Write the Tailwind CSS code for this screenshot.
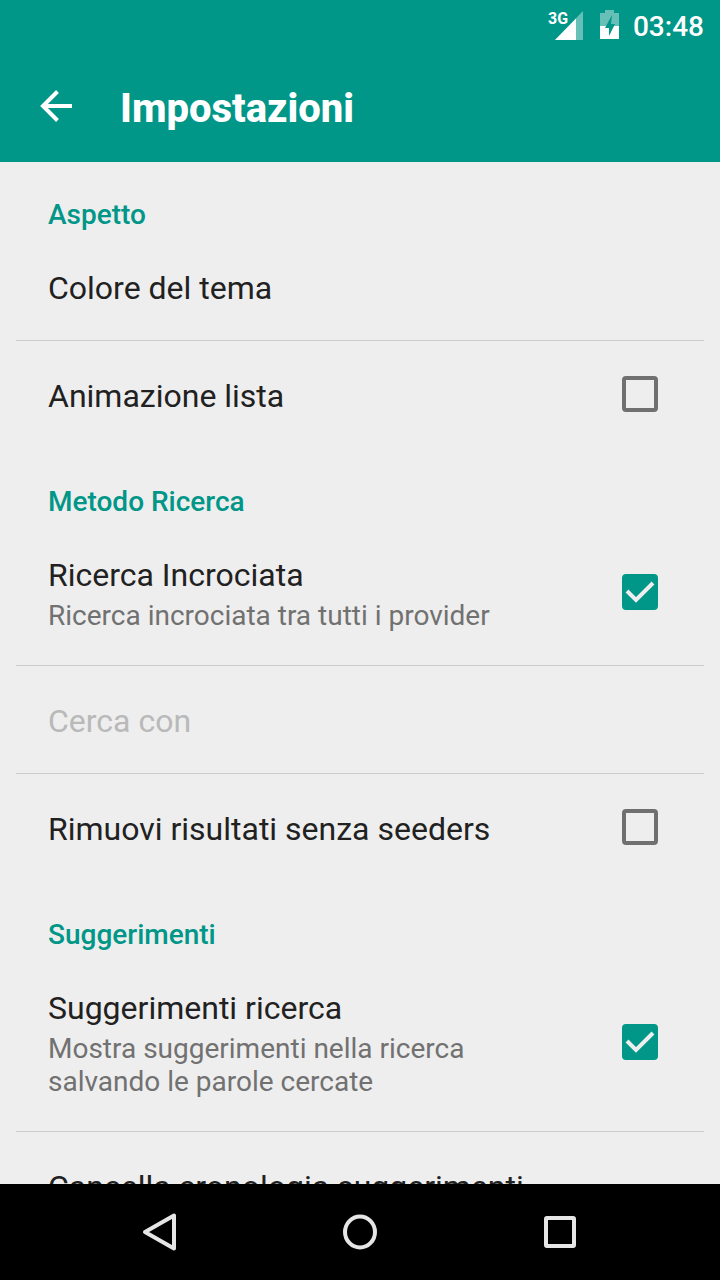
<!DOCTYPE html>
<html lang="it">
<head>
<meta charset="utf-8">
<meta name="viewport" content="width=device-width, initial-scale=1">
<title>Impostazioni</title>
<script src="https://cdn.jsdelivr.net/npm/@tailwindcss/browser@4"></script>
</head>
<body class="flex h-screen flex-col overflow-hidden bg-[#eeeeee] font-['Roboto',sans-serif] text-[#212121]">

<header class="z-10 shrink-0 bg-[#009688] text-white">
  <!-- Status bar -->
  <div class="flex h-[50px] items-center justify-end pr-4">
    <svg class="mr-4 h-[50px] w-9" viewBox="0 0 36 50" role="img" aria-label="Segnale 3G">
      <path d="M36 11V40H8z" fill="#fff" fill-opacity=".4"/>
      <path d="M29 18.500V40H8z" fill="#fff"/>
      <path d="M0 10H21V18L13 26H0z" fill="#009688"/>
      <text x="1" y="24" font-family="Roboto, sans-serif" font-size="16" font-weight="700" fill="#fff">3G</text>
    </svg>
    <svg class="mr-3.5 h-[50px] w-5" viewBox="0 0 20 50" role="img" aria-label="Batteria in carica">
      <path d="M6 10H15V13H20V26H1V13H6z" fill="#fff" fill-opacity=".4"/>
      <path d="M1 26H20V39H1z" fill="#fff"/>
      <path d="M13 15L6 28H10V36L16 24H12z" fill="#009688"/>
    </svg>
    <time class="pt-1 text-[28px] leading-8 font-medium">03:48</time>
  </div>
  <!-- Toolbar -->
  <div class="flex h-28 items-center gap-10 px-8">
    <button type="button" aria-label="Indietro" class="size-12">
      <svg class="size-12" viewBox="0 0 48 48" fill="none" stroke="#fff" stroke-width="4"><path d="M40 24H11M25.500 9.500L11 24L25.500 38.500"/></svg>
    </button>
    <h1 class="pt-1.5 text-[40px] leading-12 font-extrabold">Impostazioni</h1>
  </div>
</header>

<main class="-mt-px min-h-0 flex-1 overflow-y-auto [scrollbar-width:none]">
  <section>
    <h2 class="h-[72px] px-12 pt-9 text-[28px] leading-9 font-medium text-[#009688]">Aspetto</h2>
    <button type="button" class="block w-full px-12 pt-[35px] pb-8 text-left text-[32px] leading-10">Colore del tema</button>
    <hr class="mx-4 border-[#cccccc]">
    <label class="flex items-center justify-between pr-[62px] pl-12">
      <span class="pt-[35px] pb-8 text-[32px] leading-10">Animazione lista</span>
      <span class="grid shrink-0 pb-px">
        <input type="checkbox" class="peer col-start-1 row-start-1 size-9 appearance-none rounded border-4 border-[#707070] checked:border-[#009688] checked:bg-[#009688]">
        <svg class="pointer-events-none col-start-1 row-start-1 hidden size-9 peer-checked:block" viewBox="0 0 36 36" fill="none" stroke="#eee" stroke-width="4"><path d="M5 17L14 26L31 9"/></svg>
      </span>
    </label>
  </section>

  <section>
    <h2 class="h-[72px] px-12 pt-9 text-[28px] leading-9 font-medium text-[#009688]">Metodo Ricerca</h2>
    <label class="flex items-center justify-between pr-[62px] pl-12">
      <span class="pt-[35px] pb-[33px]">
        <span class="block text-[32px] leading-10">Ricerca Incrociata</span>
        <span class="mt-1 block max-w-[480px] text-[28px] leading-[33px] text-[#717171]">Ricerca incrociata tra tutti i provider</span>
      </span>
      <span class="grid shrink-0 pb-px">
        <input type="checkbox" checked class="peer col-start-1 row-start-1 size-9 appearance-none rounded border-4 border-[#707070] checked:border-[#009688] checked:bg-[#009688]">
        <svg class="pointer-events-none col-start-1 row-start-1 hidden size-9 peer-checked:block" viewBox="0 0 36 36" fill="none" stroke="#eee" stroke-width="4"><path d="M5 17L14 26L31 9"/></svg>
      </span>
    </label>
    <hr class="mx-4 border-[#cccccc]">
    <button type="button" disabled class="block w-full px-12 pt-[35px] pb-8 text-left text-[32px] leading-10 text-[#b9b9b9]">Cerca con</button>
    <hr class="mx-4 border-[#cccccc]">
    <label class="flex items-center justify-between pr-[62px] pl-12">
      <span class="pt-[35px] pb-8 text-[32px] leading-10">Rimuovi risultati senza seeders</span>
      <span class="grid shrink-0 pb-px">
        <input type="checkbox" class="peer col-start-1 row-start-1 size-9 appearance-none rounded border-4 border-[#707070] checked:border-[#009688] checked:bg-[#009688]">
        <svg class="pointer-events-none col-start-1 row-start-1 hidden size-9 peer-checked:block" viewBox="0 0 36 36" fill="none" stroke="#eee" stroke-width="4"><path d="M5 17L14 26L31 9"/></svg>
      </span>
    </label>
  </section>

  <section>
    <h2 class="h-[72px] px-12 pt-9 text-[28px] leading-9 font-medium text-[#009688]">Suggerimenti</h2>
    <label class="flex items-center justify-between pr-[62px] pl-12">
      <span class="pt-[35px] pb-[33px]">
        <span class="block text-[32px] leading-10">Suggerimenti ricerca</span>
        <span class="mt-1 block max-w-[480px] text-[28px] leading-[33px] text-[#717171]">Mostra suggerimenti nella ricerca salvando le parole cercate</span>
      </span>
      <span class="grid shrink-0 pb-px">
        <input type="checkbox" checked class="peer col-start-1 row-start-1 size-9 appearance-none rounded border-4 border-[#707070] checked:border-[#009688] checked:bg-[#009688]">
        <svg class="pointer-events-none col-start-1 row-start-1 hidden size-9 peer-checked:block" viewBox="0 0 36 36" fill="none" stroke="#eee" stroke-width="4"><path d="M5 17L14 26L31 9"/></svg>
      </span>
    </label>
    <hr class="mx-4 border-[#cccccc]">
    <button type="button" class="block w-full px-12 pt-[35px] pb-8 text-left text-[32px] leading-10">Cancella cronologia suggerimenti</button>
  </section>
</main>

<!-- System navigation -->
<nav class="h-24 shrink-0 bg-black" aria-label="Navigazione di sistema">
  <div class="mx-auto grid h-full max-w-[600px] grid-cols-3 place-items-center">
    <button type="button" aria-label="Indietro" class="size-12"><svg class="size-12" viewBox="0 0 48 48" fill="none" stroke="#e6e6e6" stroke-width="4" stroke-linejoin="round"><path d="M38 7.500V40.500L9 24z"/></svg></button>
    <button type="button" aria-label="Home" class="size-12"><svg class="size-12" viewBox="0 0 48 48" fill="none" stroke="#e6e6e6" stroke-width="4"><ellipse cx="24" cy="24" rx="15" ry="15.500"/></svg></button>
    <button type="button" aria-label="App recenti" class="size-12"><svg class="size-12" viewBox="0 0 48 48" fill="none" stroke="#e6e6e6" stroke-width="4"><rect x="10" y="10" width="28" height="28" rx="1"/></svg></button>
  </div>
</nav>
</body>
</html>
